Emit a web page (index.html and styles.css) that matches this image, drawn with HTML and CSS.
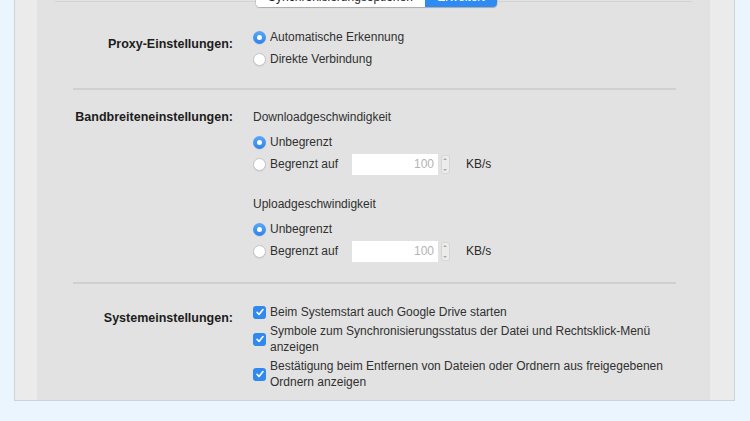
FILE: index.html
```html
<!DOCTYPE html>
<html lang="de">
<head>
	<meta charset="UTF-8">
	<title>Google Drive – Einstellungen</title>
	<link rel="stylesheet" href="styles.css">
</head>
<body>
	<div class="window">
		<div class="panel">
			<div class="tabs">
				<div class="segmented">
					<span class="seg">Synchronisierungsoptionen</span>
					<span class="seg active">Erweitert</span>
				</div>
			</div>

			<!-- Proxy -->
			<section class="group proxy">
				<div class="label">Proxy-Einstellungen:</div>
				<div class="controls">
					<label class="option"><span class="radio on"></span>Automatische Erkennung</label>
					<label class="option"><span class="radio"></span>Direkte Verbindung</label>
				</div>
			</section>

			<hr class="sep">

			<!-- Bandbreite -->
			<section class="group bandwidth">
				<div class="label">Bandbreiteneinstellungen:</div>
				<div class="controls">
					<div class="heading">Downloadgeschwindigkeit</div>
					<label class="option"><span class="radio on"></span>Unbegrenzt</label>
					<label class="option">
						<span class="radio"></span><span class="limit">Begrenzt auf</span>
						<span class="field">100</span><span class="stepper"></span><span class="unit">KB/s</span>
					</label>

					<div class="heading upload">Uploadgeschwindigkeit</div>
					<label class="option"><span class="radio on"></span>Unbegrenzt</label>
					<label class="option">
						<span class="radio"></span><span class="limit">Begrenzt auf</span>
						<span class="field">100</span><span class="stepper"></span><span class="unit">KB/s</span>
					</label>
				</div>
			</section>

			<hr class="sep">

			<!-- System -->
			<section class="group system">
				<div class="label">Systemeinstellungen:</div>
				<div class="controls">
					<label class="check"><span class="box"></span><span>Beim Systemstart auch Google Drive starten</span></label>
					<label class="check"><span class="box"></span><span>Symbole zum Synchronisierungsstatus der Datei und Rechtsklick-Menü<br>anzeigen</span></label>
					<label class="check"><span class="box"></span><span>Bestätigung beim Entfernen von Dateien oder Ordnern aus freigegebenen<br>Ordnern anzeigen</span></label>
				</div>
			</section>
		</div>
	</div>
</body>
</html>
```

FILE: styles.css
```css
	body {
		margin: 0;
		background: #eaf5fd;
		font: 12px/1.2 "Liberation Sans", Arial, sans-serif;
		color: #303030;
	}

	/**
	 * Window frame
	 */
	.window {
		display: flex;
		box-sizing: border-box;
		width: 721px;
		height: 421px;
		margin: -20px 0 0 14px;
		padding: 0 24px 0 22px;
		background: #ebebeb;
		border: 1px solid #c8d5dd;
		border-top: none;
	}
	.panel {
		flex: 1;
		background: #e2e2e2;
	}

	/**
	 * Tabs (segmented control)
	 */
	.tabs {
		display: flex;
		justify-content: center;
		height: 20px;
		margin-top: 7px;
		padding-left: 6px;
		background: linear-gradient(#d3d3d3, #d3d3d3) center 14px / calc(100% - 36px) 1px no-repeat;
	}
	.segmented {
		display: flex;
		border-radius: 4px;
		overflow: hidden;
		box-shadow: 0 0 0 1px rgba(0,0,0,.08), 0 1px 1px rgba(0,0,0,.18);
	}
	.seg {
		width: 169px;
		line-height: 20px;
		text-align: center;
		background: #fff;
		color: #222;
		overflow: hidden;
		white-space: nowrap;
	}
	.seg.active {
		width: 72px;
		background: #2f8bf4;
		color: #fff;
	}

	/**
	 * Groups
	 */
	.group {
		display: grid;
		grid-template-columns: 196px 1fr;
		column-gap: 20px;
	}
	.label {
		text-align: right;
		font-weight: bold;
		font-size: 12.5px;
		color: #1c1c1c;
		white-space: nowrap;
	}
	.sep {
		height: 2px;
		margin: 18px 34px 0 36px;
		border: 0;
		background: #d0d0d0;
	}

	.proxy { margin-top: 19px; }
	.proxy .label { padding-top: 10px; line-height: 16px; }

	.bandwidth { margin-top: 16px; padding-bottom: 2px; }
	.bandwidth .label { line-height: 22px; }

	.system { margin-top: 20px; padding-bottom: 10px; }
	.system .label { padding-top: 6px; line-height: 16px; }

	.option {
		display: flex;
		align-items: center;
		height: 22px;
		white-space: nowrap;
	}
	.heading {
		height: 22px;
		line-height: 22px;
		margin-bottom: 3px;
	}
	.heading.upload {
		margin-top: 18px;
	}

	/**
	 * Radio buttons
	 */
	.radio {
		position: relative;
		box-sizing: border-box;
		width: 13px;
		height: 13px;
		margin-right: 4px;
		border-radius: 50%;
		background: #fff;
		border: 1px solid #c3c3c3;
		box-shadow: 0 1px 1px rgba(0,0,0,.06);
	}
	.radio.on {
		border: none;
		background: linear-gradient(#5aa8fa, #2e82ea);
	}
	.radio.on:after {
		content: '';
		position: absolute;
		top: 4px; left: 4px;
		width: 5px; height: 5px;
		border-radius: 50%;
		background: #fff;
	}

	/**
	 * Bandwidth limit input
	 */
	.limit { width: 82px; }
	.field {
		box-sizing: border-box;
		width: 86px;
		height: 21px;
		padding-right: 4px;
		line-height: 21px;
		text-align: right;
		background: #fff;
		color: #b4b4b4;
	}
	.stepper {
		position: relative;
		width: 9px;
		height: 19px;
		margin-left: 3px;
		border-radius: 3px;
		background: #ececec;
		box-shadow: 0 0 0 1px #d6d6d6 inset;
	}
	.stepper:before, .stepper:after {
		content: '';
		position: absolute;
		left: 2px;
		border: 2.5px solid transparent;
	}
	.stepper:before { top: 1px; border-bottom-color: #a8a8a8; }
	.stepper:after { bottom: 1px; border-top-color: #a8a8a8; }
	.unit {
		margin-left: 16px;
		color: #2a2a2a;
	}

	/**
	 * Checkboxes
	 */
	.check {
		display: flex;
		align-items: center;
		line-height: 16px;
		margin-bottom: 3px;
		white-space: nowrap;
	}
	.box {
		flex: none;
		width: 13px;
		height: 13px;
		margin-right: 4px;
		border-radius: 3px;
		background: #3189ee url("data:image/svg+xml,%3Csvg xmlns='http://www.w3.org/2000/svg' viewBox='0 0 12 12'%3E%3Cpath d='M3 6.3l2 2.2 4-5' fill='none' stroke='white' stroke-width='1.6' stroke-linecap='round' stroke-linejoin='round'/%3E%3C/svg%3E") center / 12px no-repeat;
	}
```
